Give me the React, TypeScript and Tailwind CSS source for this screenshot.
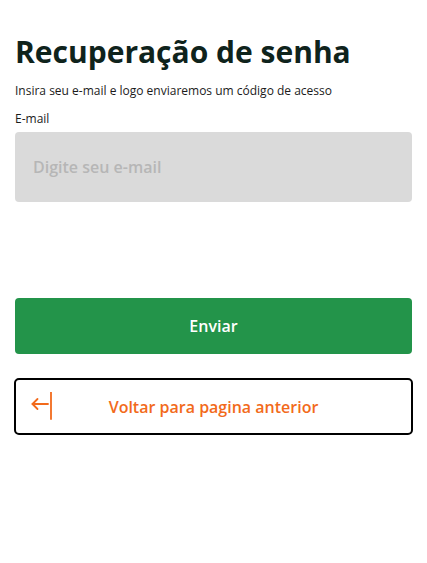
import { useState } from "react"

const ArrowBackIcon = () => (
  <svg width="24" height="28" viewBox="0 0 24 28" fill="none" stroke="#f26a1b" strokeWidth="1.8" strokeLinecap="round" strokeLinejoin="round">
    <path d="M8.5 7 3.5 12 8.5 17" />
    <path d="M3.5 12H19" />
    <path d="M22 0.5V27" />
  </svg>
)

export default function App() {
  const [email, setEmail] = useState("")

  return (
    <div className="min-h-screen bg-white px-[15px] pt-[30px] font-['Open_Sans',sans-serif]">
      <h1 className="text-[30px] font-bold leading-[44px] text-[#0f231c]">Recuperação de senha</h1>
      <p className="mt-[8px] text-[12px] leading-[18px] text-[#1b1b1b]">
        Insira seu e-mail e logo enviaremos um código de acesso
      </p>

      <label className="mt-[10px] block text-[12px] leading-[18px] text-[#1b1b1b]">E-mail</label>
      <input
        value={email}
        onChange={(e) => setEmail(e.target.value)}
        placeholder="Digite seu e-mail"
        className="mt-[4px] block h-[70px] w-full rounded-[4px] bg-[#dadada] px-[18px] text-[16px] font-semibold text-[#333] outline-none placeholder:text-[#b6b6b6]"
      />

      <button className="mt-[96px] flex h-[56px] w-full items-center justify-center rounded-[4px] bg-[#23944a] text-[16px] font-semibold text-white">
        Enviar
      </button>

      <button className="relative mt-[24px] flex h-[57px] w-[399px] -ml-[1px] items-center justify-center rounded-[5px] border-2 border-black bg-white text-[16px] font-semibold text-[#f26a1b]">
        <span className="absolute left-[13px] top-[12px]">
          <ArrowBackIcon />
        </span>
        Voltar para pagina anterior
      </button>
    </div>
  )
}
